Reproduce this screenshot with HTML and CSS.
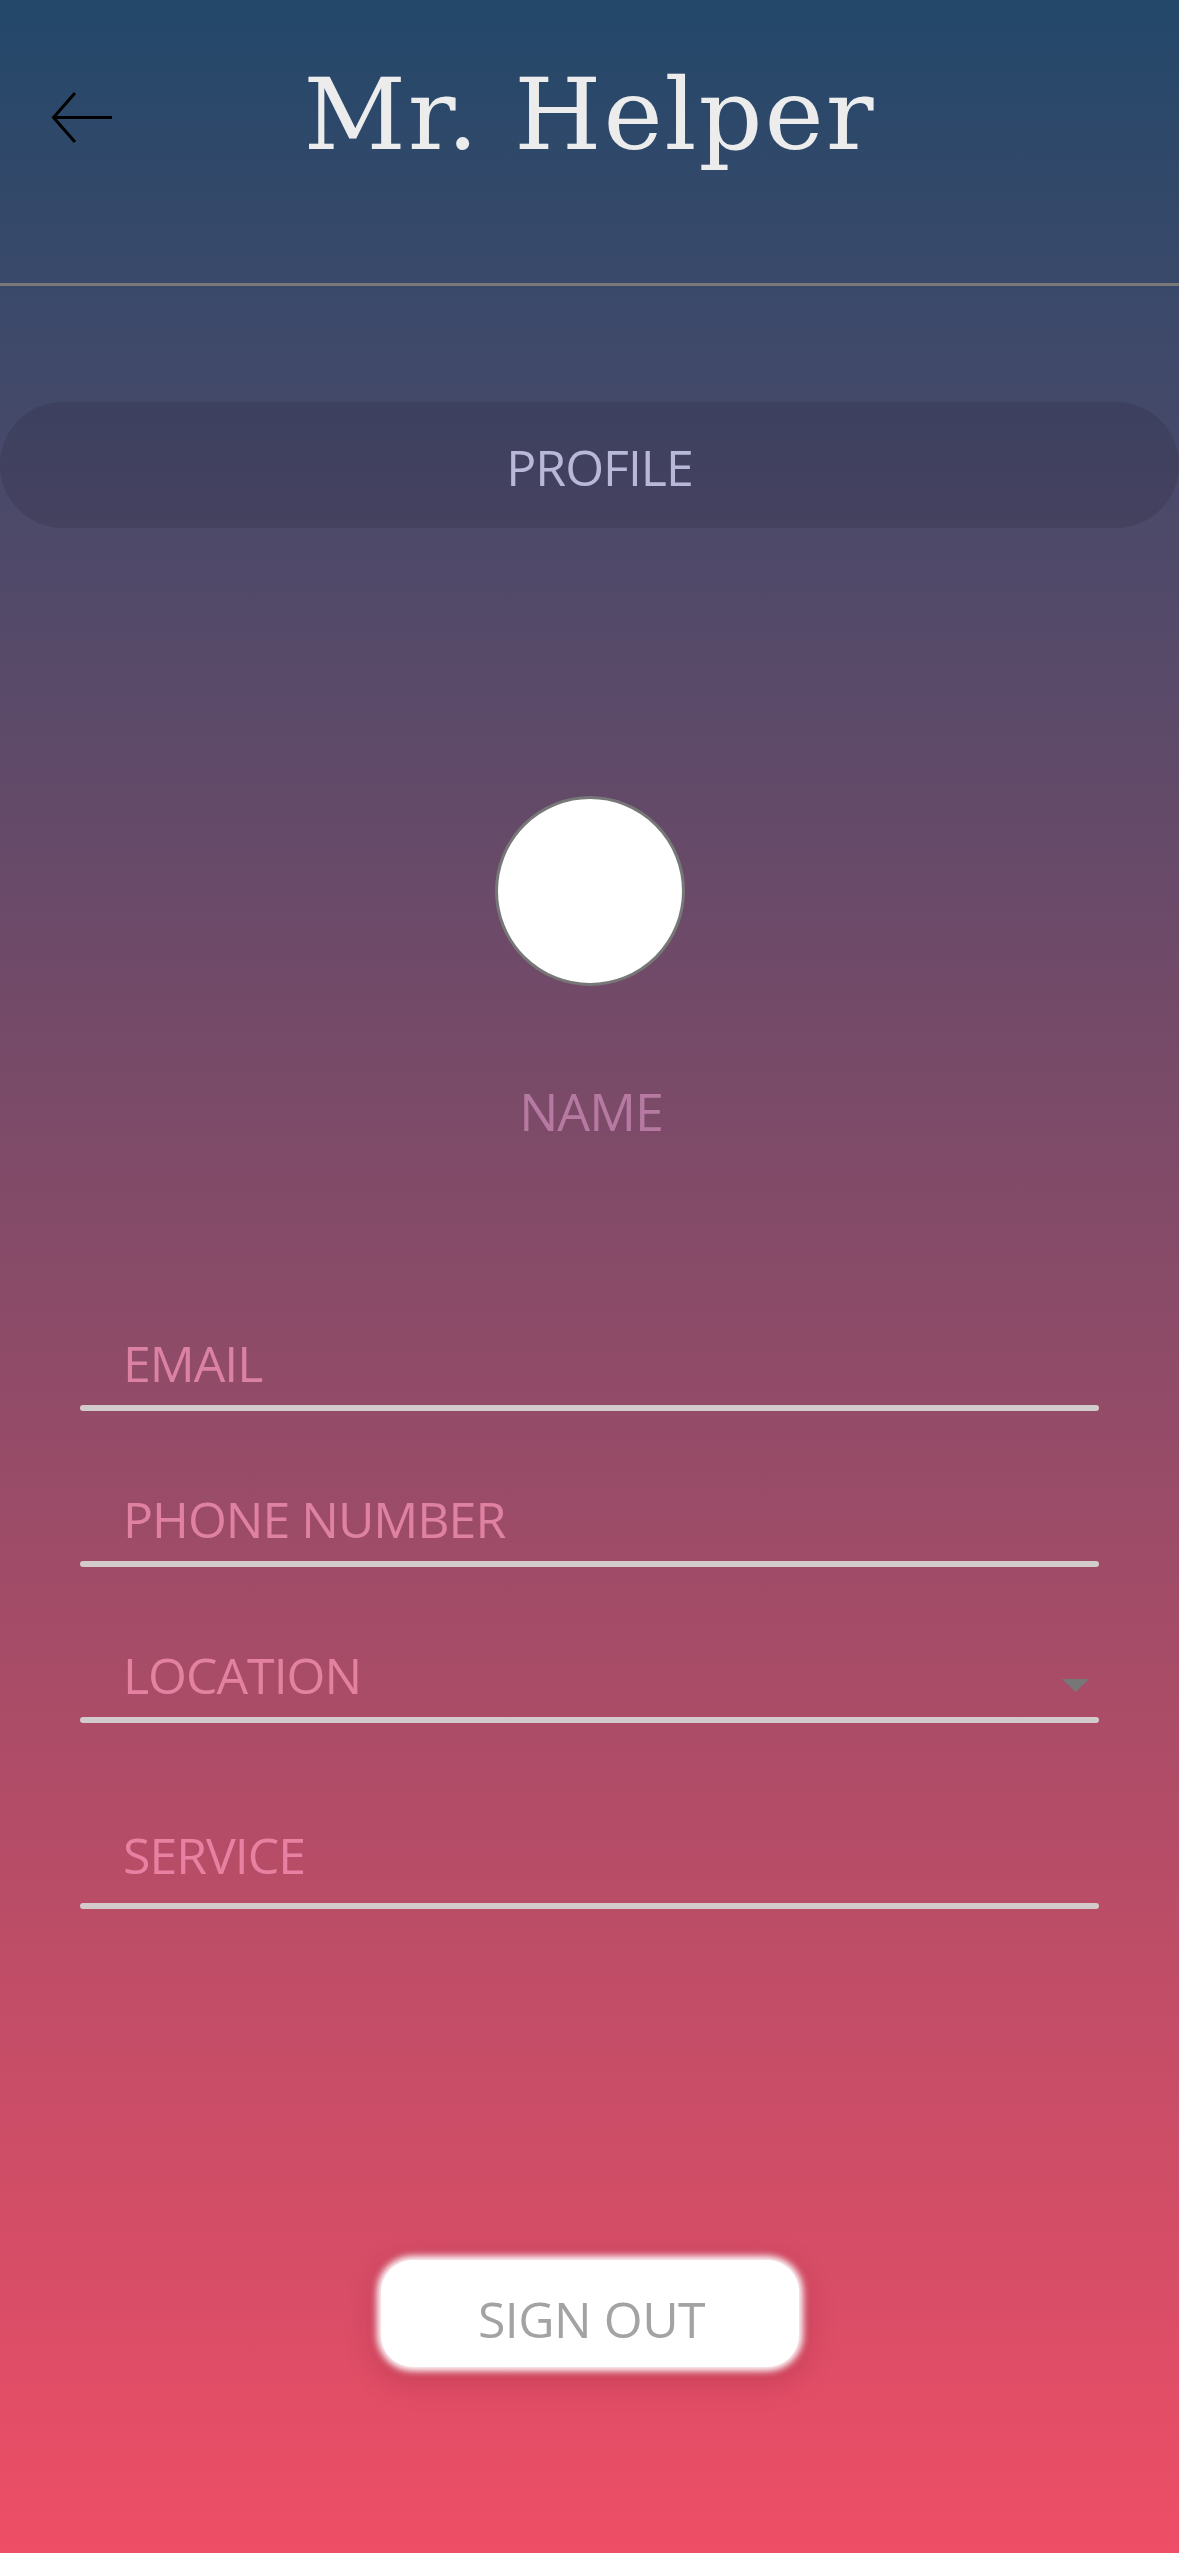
FILE: index.html
```html
<!DOCTYPE html>
<html lang="en">
<head>
<meta charset="utf-8">
<title>Mr. Helper – Profile</title>
<link rel="stylesheet" href="styles.css">
</head>
<body>
<div class="screen">
  <header class="topbar">
    <button class="back" aria-label="Back">
      <svg width="64" height="56" viewBox="0 0 64 56" aria-hidden="true">
        <path d="M62 27.5 H4 M25 3 L3.5 27.5 L25 52" fill="none" stroke="#000" stroke-width="3" stroke-linecap="butt" stroke-linejoin="miter"/>
      </svg>
    </button>
    <h1 class="title">Mr. Helper</h1>
    <span class="spacer"></span>
  </header>
  <hr class="divider">

  <div class="tab">PROFILE</div>

  <div class="avatar"></div>
  <div class="name">NAME</div>

  <div class="fields">
    <div class="field">
      <div class="field-row"><span class="label">EMAIL</span></div>
      <div class="underline"></div>
    </div>
    <div class="field">
      <div class="field-row"><span class="label">PHONE NUMBER</span></div>
      <div class="underline"></div>
    </div>
    <div class="field">
      <div class="field-row">
        <span class="label">LOCATION</span>
        <svg class="caret" width="27" height="13" viewBox="0 0 27 13" aria-hidden="true"><polygon points="0,0 27,0 13.5,13" fill="#777"/></svg>
      </div>
      <div class="underline"></div>
    </div>
    <div class="field field--service">
      <div class="field-row"><span class="label">SERVICE</span></div>
      <div class="underline"></div>
    </div>
  </div>

  <div class="actions">
    <button class="signout">SIGN OUT</button>
  </div>
</div>
</body>
</html>
```

FILE: styles.css
```css
html, body {
  margin: 0;
  padding: 0;
}

body {
  font-family: "Open Sans", "Noto Sans", sans-serif;
}

.screen {
  min-height: 2553px;
  display: flex;
  flex-direction: column;
  background: linear-gradient(to bottom, #23486a 0%, #ee4e66 100%);
}

.topbar {
  height: 283px;
  box-sizing: border-box;
  padding-top: 65px;
  display: grid;
  grid-template-columns: 1fr auto 1fr;
  align-items: center;
  align-content: start;
}

.back {
  justify-self: start;
  margin-left: 50px;
  margin-top: 6px;
  padding: 0;
  border: 0;
  background: none;
  display: flex;
}

.title {
  margin: 0;
  font-family: "DejaVu Serif", serif;
  font-weight: normal;
  font-size: 100px;
  line-height: 100px;
  letter-spacing: 2px;
  color: #ececec;
}

.divider {
  margin: 0;
  border: 0;
  height: 3px;
  background: #787878;
}

.tab {
  margin-top: 116px;
  height: 126px;
  border-radius: 63px;
  background: rgba(30, 20, 40, 0.15);
  display: flex;
  align-items: center;
  justify-content: center;
  box-sizing: border-box;
  padding-left: 20px;
  padding-top: 4px;
  color: #b9b8d9;
  font-size: 50px;
  line-height: 50px;
  letter-spacing: -1px;
}

.avatar {
  width: 190px;
  height: 190px;
  box-sizing: border-box;
  border: 3px solid #777;
  border-radius: 50%;
  background: #fff;
  margin: 268px auto 0;
}

.name {
  margin-top: 99px;
  padding-left: 3px;
  text-align: center;
  font-size: 52px;
  line-height: 52px;
  letter-spacing: -1px;
  color: rgba(230, 160, 210, 0.55);
}

.fields {
  margin: 201px 80px 0;
  display: flex;
  flex-direction: column;
}

.field + .field {
  margin-top: 83px;
}

.field-row {
  height: 50px;
  padding-left: 43px;
  display: flex;
  justify-content: space-between;
}

.label {
  font-size: 50px;
  line-height: 50px;
  letter-spacing: -1px;
  color: rgba(255, 155, 188, 0.68);
}

.caret {
  margin-top: 29px;
  margin-right: 10px;
}

.underline {
  margin-top: 17px;
  height: 6px;
  border-radius: 3px;
  background: #d3cbcb;
}

.field + .field--service {
  margin-top: 107px;
}

.field--service .underline {
  margin-top: 23px;
}

.actions {
  margin-top: 346px;
  display: flex;
  justify-content: center;
}

.signout {
  width: 418px;
  height: 107px;
  margin: 5px;
  box-sizing: border-box;
  padding: 10px 0 0 4px;
  border: 0;
  border-radius: 32px;
  background: #fff;
  box-shadow: 0 0 7px 4px #fff, 0 8px 28px 8px rgba(120, 20, 40, 0.22);
  display: flex;
  align-items: center;
  justify-content: center;
  font-family: "Open Sans", "Noto Sans", sans-serif;
  font-size: 50px;
  line-height: 50px;
  letter-spacing: -0.5px;
  color: #a3a3a3;
}
```
